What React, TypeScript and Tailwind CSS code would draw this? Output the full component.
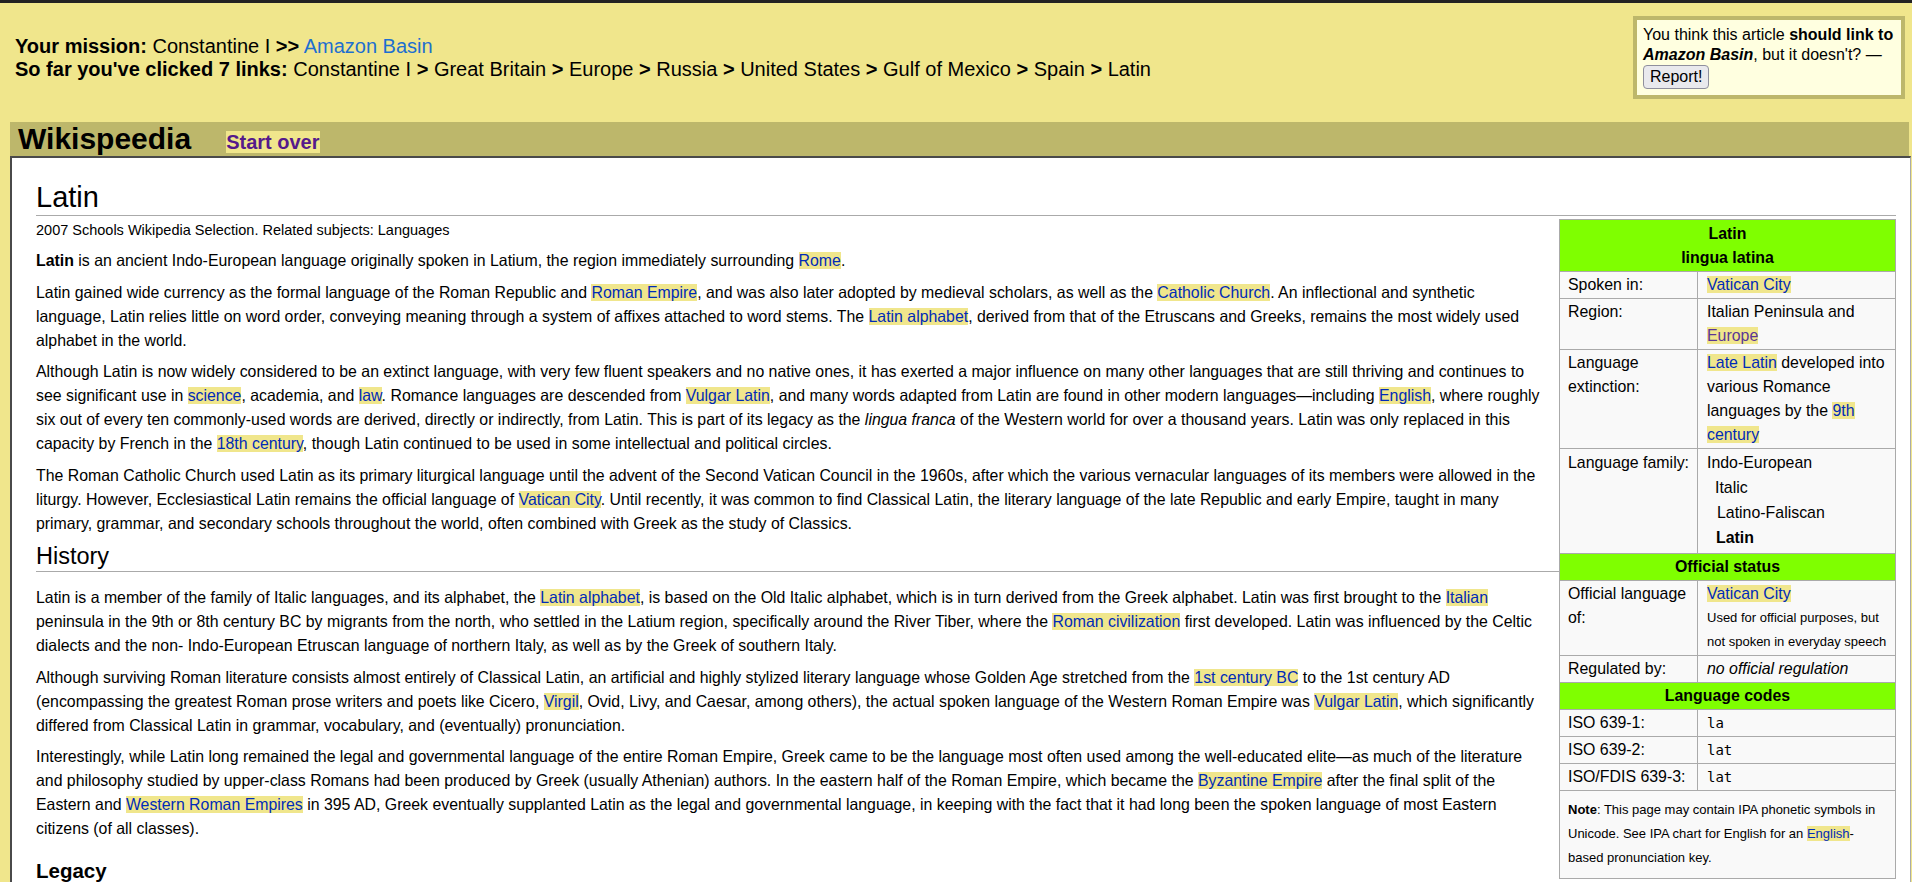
import type { ReactNode } from "react";

const path = [
	"Constantine I",
	"Great Britain",
	"Europe",
	"Russia",
	"United States",
	"Gulf of Mexico",
	"Spain",
	"Latin",
];

const Lk = ({ children, visited }: { children: ReactNode; visited?: boolean }) => (
	<a
		href="#"
		className={
			visited ? "bg-[#f0e68c] text-[#5a3696]" : "bg-[#f0e68c] text-[#002bb8]"
		}
	>
		{children}
	</a>
);

const Row = ({ label, children, cls }: { label: ReactNode; children: ReactNode; cls?: string }) => (
	<tr>
		<td className="border border-[#aaa] align-top pl-[8px] pr-[2px] py-[1px]">{label}</td>
		<td className={cls ?? "border border-[#aaa] align-top pl-[9px] pr-[4px] py-[1px]"}>
			{children}
		</td>
	</tr>
);

const Head = ({ children }: { children: ReactNode }) => (
	<tr>
		<th colSpan={2} className="border border-[#aaa] bg-[#7fff00] py-[1px] text-center font-bold">
			{children}
		</th>
	</tr>
);

const Infobox = () => (
	<table className="float-right ml-[16px] mt-[3px] w-[337px] table-fixed border-collapse border border-[#aaa] bg-[#f9f9f9] text-[15.9px] leading-[24px]">
		<colgroup>
			<col className="w-[138px]" />
			<col />
		</colgroup>
		<tbody>
			<tr>
				<th colSpan={2} className="border border-[#aaa] bg-[#7fff00] pt-[2px] pb-[1px] text-center font-bold">
					Latin
					<br />
					lingua latina
				</th>
			</tr>
			<Row label="Spoken in:">
				<Lk>Vatican City</Lk>
			</Row>
			<Row label="Region:">
				Italian Peninsula and <Lk visited>Europe</Lk>
			</Row>
			<Row label="Language extinction:">
				<Lk>Late Latin</Lk> developed into various Romance languages by the{" "}
				<Lk>9th century</Lk>
			</Row>
			<Row
				label={<div className="leading-[25px]">Language family:</div>}
				cls="border border-[#aaa] align-top pl-[9px] pr-[4px] pt-[1px] pb-[3px] leading-[25px]"
			>
				<div>Indo-European</div>
				<div className="pl-[8px]">Italic</div>
				<div className="pl-[10px]">Latino-Faliscan</div>
				<div className="pl-[9px] font-bold">Latin</div>
			</Row>
			<Head>Official status</Head>
			<Row label="Official language of:">
				<Lk>Vatican City</Lk>
				<div className="text-[13px]">
					Used for official purposes, but
					<br />
					not spoken in everyday speech
				</div>
			</Row>
			<Row label="Regulated by:">
				<i>no official regulation</i>
			</Row>
			<Head>Language codes</Head>
			{[
				["ISO 639-1:", "la"],
				["ISO 639-2:", "lat"],
				["ISO/FDIS 639-3:", "lat"],
			].map(([k, v]) => (
				<Row key={k} label={k}>
					<code className="font-['DejaVu_Sans_Mono',monospace] text-[14px]">{v}</code>
				</Row>
			))}
			<tr>
				<td colSpan={2} className="border border-[#aaa] px-[8px] pt-[7px] pb-[8px] text-[13px] leading-[24px]">
					<b>Note</b>: This page may contain IPA phonetic symbols in
					<br />
					Unicode. See IPA chart for English for an <Lk>English</Lk>-
					<br />
					based pronunciation key.
				</td>
			</tr>
		</tbody>
	</table>
);

export default function App() {
	return (
		<div className="min-h-screen bg-[#f0e68c] font-['Liberation_Sans',Arial,sans-serif] text-black">
			<div className="h-[3px] bg-[#222]" />

			{/* mission header */}
			<header className="flex h-[119px] items-start justify-between">
				<div className="pl-[15px] pt-[32px] text-[20px] leading-[23px]">
					<div>
						<b>Your mission:</b> Constantine I <b>&gt;&gt;</b>{" "}
						<a href="#" className="text-[#1e6fd0]">
							Amazon Basin
						</a>
					</div>
					<div>
						<b>So far you've clicked 7 links:</b>{" "}
						{path.map((p, i) => (
							<span key={p}>
								{i > 0 && <b> &gt; </b>}
								{p}
							</span>
						))}
					</div>
				</div>
				<div className="mr-[7px] mt-[13px] w-[272px] border-4 border-[#bdb76b] bg-[#ffffe0] pl-[6px] pr-[2px] pt-[5px] pb-[6px] text-[16px] leading-[20px]">
					You think this article <b>should link to</b>
					<br />
					<b>
						<i>Amazon Basin</i>
					</b>
					, but it doesn't? —
					<div>
						<button className="rounded-[4px] border border-[#8f8f9d] bg-[#e9e9ed] px-[6px] py-[1px] text-[16px] leading-[20px]">
							Report!
						</button>
					</div>
				</div>
			</header>

			<div className="ml-[10px] mr-[1px]">
				<div className="mr-[2px] flex h-[34px] items-end bg-[#bdb76b] pl-[8px]">
					<span className="text-[30px] font-bold leading-[34px]">Wikispeedia</span>
					<a href="#" className="mb-[3px] ml-[35px] bg-[#f0e68c] text-[20px] font-bold leading-[22px] text-[#551a8b]">
						Start over
					</a>
				</div>

				<main className="border-l-2 border-t-2 border-r border-[#4a4a4a] border-r-[#aaa] bg-white pl-[24px] pr-[14px] pt-[22px] pb-[40px] text-[15.87px] leading-[24px]">
					<h1 className="border-b border-[#aaa] text-[29px] leading-[35px]">Latin</h1>
					<Infobox />
					<div className="mt-[4px] text-[14.5px] leading-[20px]">
						2007 Schools Wikipedia Selection. Related subjects: Languages
					</div>

					<p className="mb-[7.5px] mt-[9px]">
						<b>Latin</b> is an ancient Indo-European language originally spoken in Latium, the region
						immediately surrounding <Lk>Rome</Lk>.
					</p>
					<p className="mb-[7.5px]">
						Latin gained wide currency as the formal language of the Roman Republic and{" "}
						<Lk>Roman Empire</Lk>, and was also later adopted by medieval scholars, as well as the{" "}
						<Lk>Catholic Church</Lk>. An inflectional and synthetic language, Latin relies little on
						word order, conveying meaning through a system of affixes attached to word stems. The{" "}
						<Lk>Latin alphabet</Lk>, derived from that of the Etruscans and Greeks, remains the most
						widely used alphabet in the world.
					</p>
					<p className="mb-[7.5px]">
						Although Latin is now widely considered to be an extinct language, with very few fluent
						speakers and no native ones, it has exerted a major influence on many other languages that
						are still thriving and continues to see significant use in <Lk>science</Lk>, academia, and{" "}
						<Lk>law</Lk>. Romance languages are descended from <Lk>Vulgar Latin</Lk>, and many words
						adapted from Latin are found in other modern languages—including <Lk>English</Lk>, where
						roughly six out of every ten commonly-used words are derived, directly or indirectly, from
						Latin. This is part of its legacy as the <i>lingua franca</i> of the Western world for over
						a thousand years. Latin was only replaced in this capacity by French in the{" "}
						<Lk>18th century</Lk>, though Latin continued to be used in some intellectual and political
						circles.
					</p>
					<p className="mb-[7.5px]">
						The Roman Catholic Church used Latin as its primary liturgical language until the advent of
						the Second Vatican Council in the 1960s, after which the various vernacular languages of its
						members were allowed in the liturgy. However, Ecclesiastical Latin remains the official
						language of <Lk>Vatican City</Lk>. Until recently, it was common to find Classical Latin,
						the literary language of the late Republic and early Empire, taught in many primary,
						grammar, and secondary schools throughout the world, often combined with Greek as the study
						of Classics.
					</p>

					<h2 className="mb-[14px] border-b border-[#aaa] pb-[1px] text-[23.5px] leading-[27px]">
						History
					</h2>
					<p className="mb-[7.5px]">
						Latin is a member of the family of Italic languages, and its alphabet, the{" "}
						<Lk>Latin alphabet</Lk>, is based on the Old Italic alphabet, which is in turn derived from
						the Greek alphabet. Latin was first brought to the <Lk>Italian</Lk> peninsula in the 9th or
						8th century BC by migrants from the north, who settled in the Latium region, specifically
						around the River Tiber, where the <Lk>Roman civilization</Lk> first developed. Latin was
						influenced by the Celtic dialects and the non- Indo-European Etruscan language of northern
						Italy, as well as by the Greek of southern Italy.
					</p>
					<p className="mb-[7.5px]">
						Although surviving Roman literature consists almost entirely of Classical Latin, an
						artificial and highly stylized literary language whose Golden Age stretched from the{" "}
						<Lk>1st century BC</Lk> to the 1st century AD (encompassing the greatest Roman prose writers
						and poets like Cicero, <Lk>Virgil</Lk>, Ovid, Livy, and Caesar, among others), the actual
						spoken language of the Western Roman Empire was <Lk>Vulgar Latin</Lk>, which significantly
						differed from Classical Latin in grammar, vocabulary, and (eventually) pronunciation.
					</p>
					<p className="mb-[7.5px]">
						Interestingly, while Latin long remained the legal and governmental language of the entire
						Roman Empire, Greek came to be the language most often used among the well-educated
						elite—as much of the literature and philosophy studied by upper-class Romans had been
						produced by Greek (usually Athenian) authors. In the eastern half of the Roman Empire, which
						became the <Lk>Byzantine Empire</Lk> after the final split of the Eastern and{" "}
						<Lk>Western Roman Empires</Lk> in 395 AD, Greek eventually supplanted Latin as the legal and
						governmental language, in keeping with the fact that it had long been the spoken language of
						most Eastern citizens (of all classes).
					</p>

					<h3 className="mt-[18px] text-[20.5px] font-bold leading-[24px]">Legacy</h3>
					<p className="mt-[7px]">
						Latin has left a lasting mark on the languages, law, science and scholarship of the Western
						world.
					</p>
				</main>
			</div>
		</div>
	);
}
